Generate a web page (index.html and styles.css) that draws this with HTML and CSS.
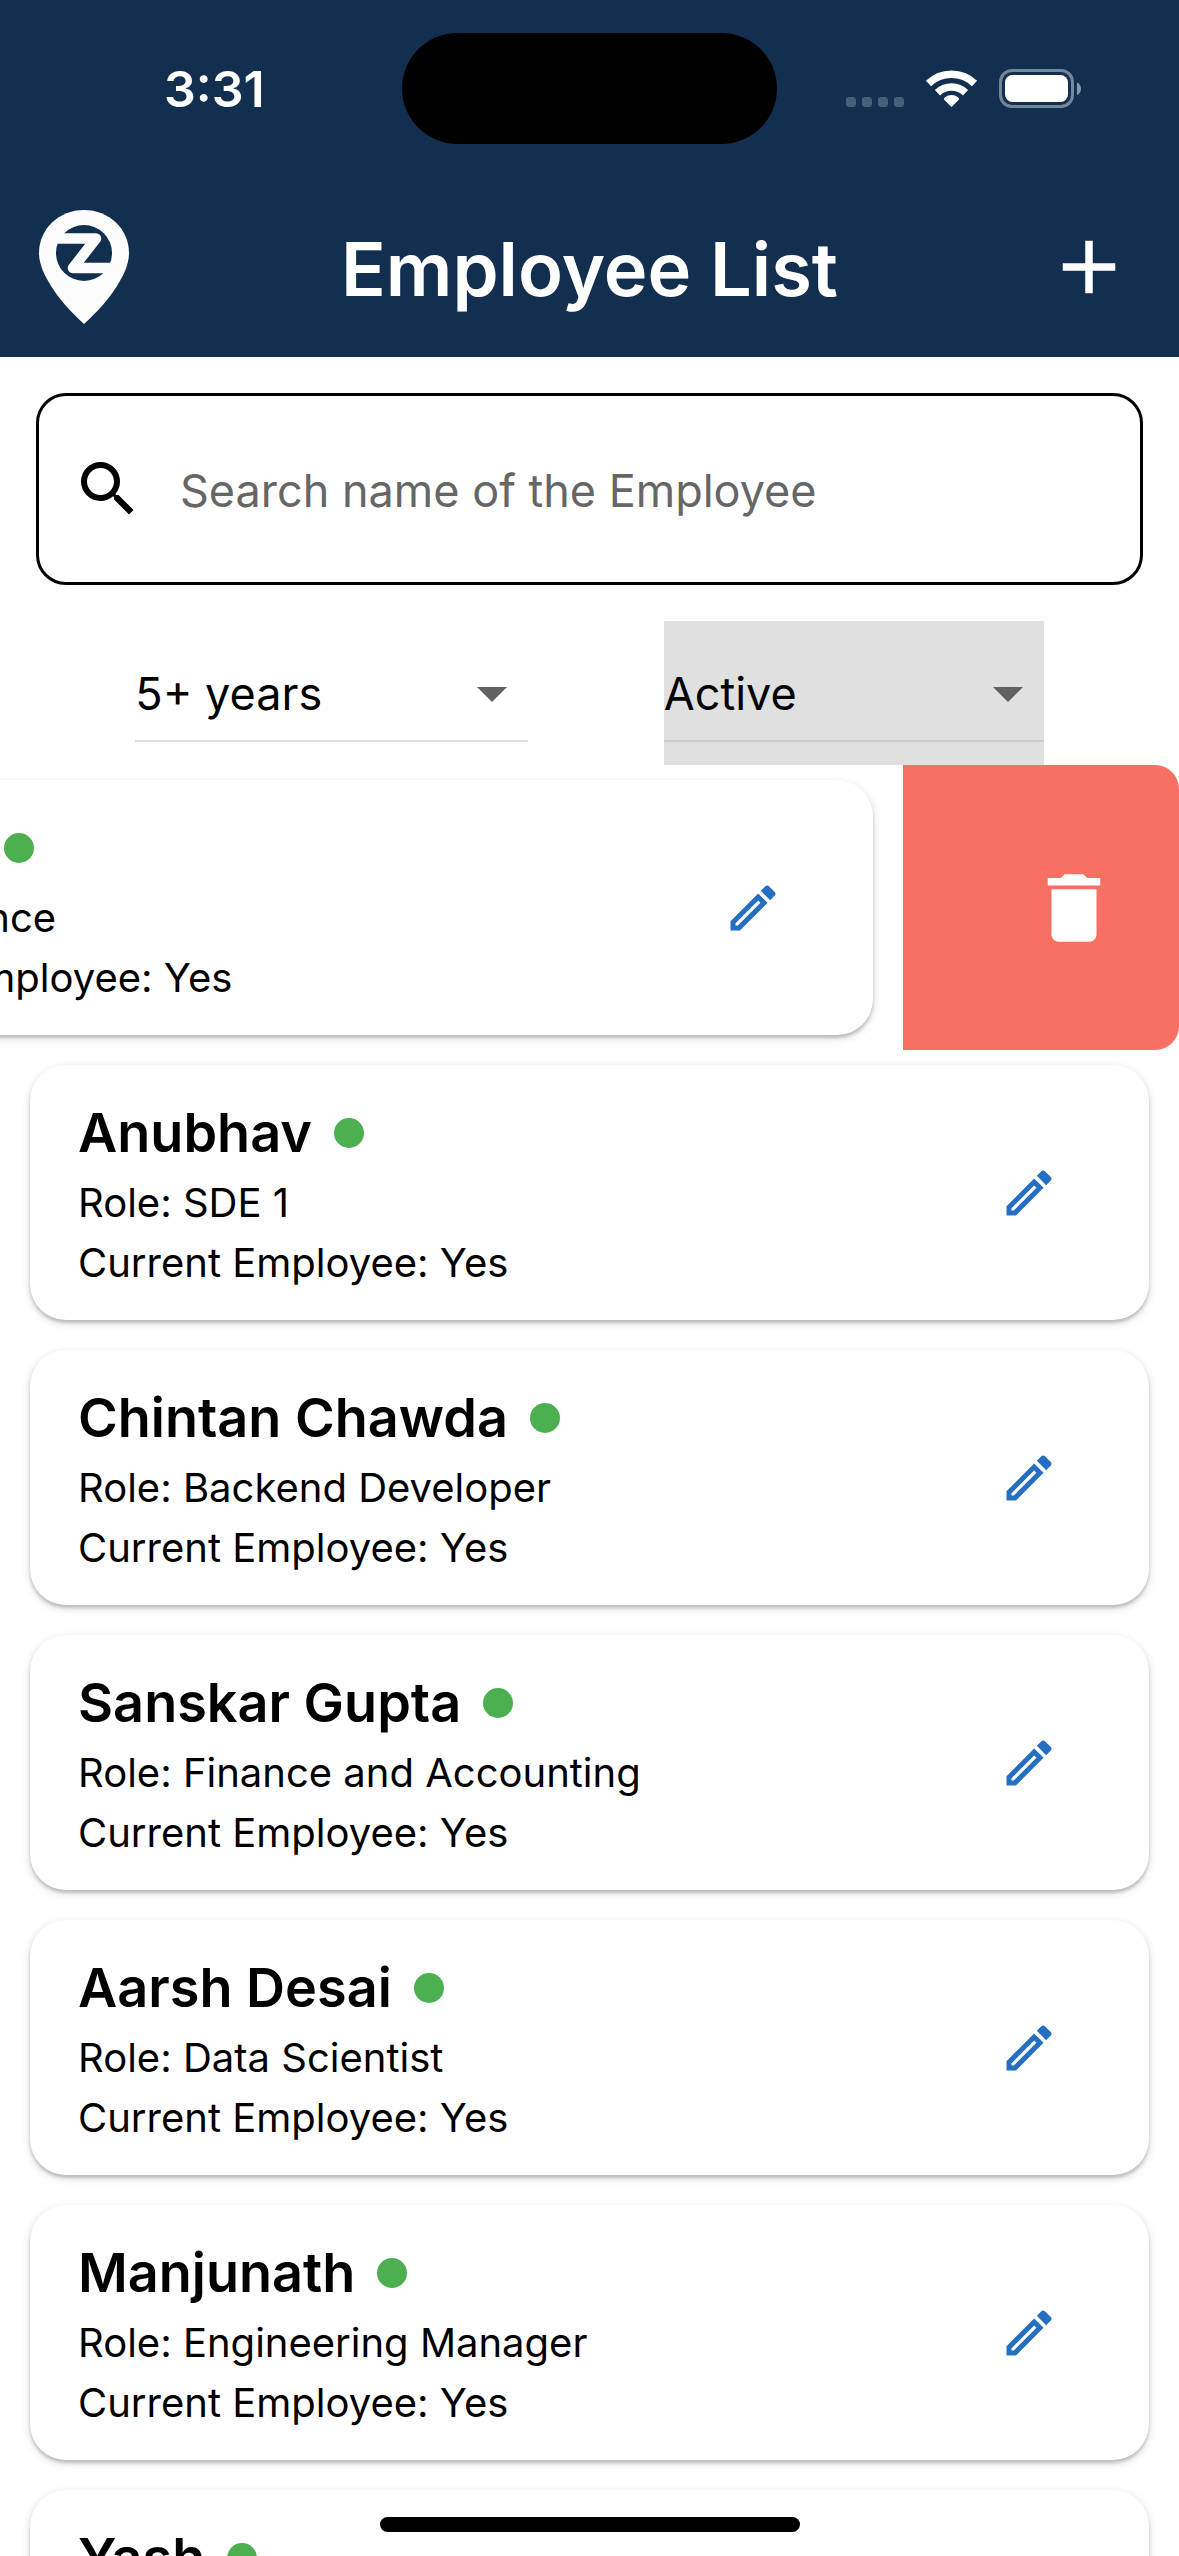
FILE: index.html
```
<!DOCTYPE html>
<html lang="en">
<head>
<meta charset="utf-8">
<meta name="viewport" content="width=device-width, initial-scale=1">
<title>Employee List</title>
<link rel="stylesheet" href="styles.css">
</head>
<body>
<svg class="sprite" aria-hidden="true">
  <symbol id="icon-edit" viewBox="0 0 24 24"><path d="m14.06 9.02.92.92L5.92 19H5v-.92l9.06-9.06M17.66 3c-.25 0-.51.1-.7.29l-1.83 1.83 3.75 3.75 1.83-1.83c.39-.39.39-1.02 0-1.41l-2.34-2.34c-.2-.2-.45-.29-.71-.29zm-3.6 3.19L3 17.25V21h3.75L17.81 9.94l-3.75-3.75z"/></symbol>
  <symbol id="icon-drop" viewBox="0 0 24 24"><path d="m7 10 5 5 5-5z"/></symbol>
</svg>
<div class="app">
  <header class="top">
    <div class="status">
      <time class="clock">3:31</time>
      <div class="island"></div>
      <svg class="signals" viewBox="0 0 236 40" role="img" aria-label="Wi-Fi on, battery full">
        <g fill="#fff" fill-opacity=".23">
          <rect x="0" y="28" width="10" height="10" rx="3"/>
          <rect x="16" y="28" width="10" height="10" rx="3"/>
          <rect x="32" y="28" width="10" height="10" rx="3"/>
          <rect x="48" y="28" width="10" height="10" rx="3"/>
        </g>
        <g fill="none" stroke="#fff">
          <path d="M82.500 14.500A33 33 0 0 1 128.500 14.500" stroke-width="7.500"/>
          <path d="M91.500 23.800A20 20 0 0 1 119.500 23.800" stroke-width="7.500"/>
        </g>
        <path d="M105.500 38 98.500 31c-.8-1-.6-2 .3-2.600a11 11 0 0 1 13.400 0c.9.600 1.100 1.600.3 2.600z" fill="#fff"/>
        <rect x="154.500" y="1.500" width="72" height="36" rx="11.500" fill="none" stroke="#fff" stroke-opacity=".42" stroke-width="3"/>
        <rect x="159" y="6" width="63" height="27" rx="7.500" fill="#fff"/>
        <path d="M231 13.500c5.300 2.200 5.300 10.300 0 12.500z" fill="#fff" fill-opacity=".5"/>
      </svg>
    </div>
    <div class="bar">
      <svg class="logo" viewBox="0 0 90 114" role="img" aria-label="Company logo">
        <path d="M45 0C20 0 0 19 0 43c0 12 6 23 12 33 8 13 20 26 33 38 13-12 25-25 33-38 6-10 12-21 12-33C90 19 70 0 45 0z" fill="#fcfcfd"/>
        <circle cx="45" cy="43" r="28" fill="#122f50"/>
        <path d="M15 28.500H57L34 58H74" fill="none" stroke="#fcfcfd" stroke-width="10.500" stroke-linejoin="round"/>
      </svg>
      <h1 class="title">Employee List</h1>
      <button class="add" type="button" aria-label="Add employee">
        <svg viewBox="0 0 24 24"><path d="M19 13h-6v6h-2v-6H5v-2h6V5h2v6h6v2z"/></svg>
      </button>
    </div>
  </header>

  <main class="content">
    <label class="search">
      <svg class="search-icon" viewBox="0 0 24 24" aria-hidden="true"><path d="M15.500 14h-.79l-.28-.27A6.471 6.471 0 0 0 16 9.500 6.500 6.500 0 1 0 9.500 16c1.610 0 3.090-.59 4.230-1.570l.27.28v.79l5 4.990L20.490 19l-4.990-5zm-6 0C7.010 14 5 11.990 5 9.500S7.010 5 9.500 5 14 7.010 14 9.500 11.990 14 9.500 14z"/></svg>
      <input class="search-input" type="search" placeholder="Search name of the Employee" aria-label="Search name of the Employee">
    </label>

    <div class="filters">
      <div class="filter filter-years">
        <select class="select" aria-label="Experience"><option>5+ years</option></select>
        <svg class="arrow" aria-hidden="true"><use href="#icon-drop"/></svg>
      </div>
      <div class="filter filter-state">
        <select class="select" aria-label="Status"><option>Active</option></select>
        <svg class="arrow" aria-hidden="true"><use href="#icon-drop"/></svg>
      </div>
    </div>

    <ul class="list">
      <li class="row row-open">
        <div class="slot"><article class="card">
          <div class="info">
            <h2 class="name">Anisha<span class="dot"></span></h2>
            <p class="line">Role: Finance</p>
            <p class="line">Current Employee: Yes</p>
          </div>
          <button class="edit" type="button" aria-label="Edit"><svg><use href="#icon-edit"/></svg></button>
        </article></div>
        <button class="delete" type="button" aria-label="Delete">
          <svg viewBox="0 0 24 24"><path d="M6 19c0 1.100.9 2 2 2h8c1.100 0 2-.9 2-2V7H6v12zM19 4h-3.500l-1-1h-5l-1 1H5v2h14V4z"/></svg>
        </button>
      </li>
      <li class="row">
        <div class="slot"><article class="card">
          <div class="info">
            <h2 class="name">Anubhav<span class="dot"></span></h2>
            <p class="line">Role: SDE 1</p>
            <p class="line">Current Employee: Yes</p>
          </div>
          <button class="edit" type="button" aria-label="Edit Anubhav"><svg><use href="#icon-edit"/></svg></button>
        </article></div>
      </li>
      <li class="row">
        <div class="slot"><article class="card">
          <div class="info">
            <h2 class="name">Chintan Chawda<span class="dot"></span></h2>
            <p class="line">Role: Backend Developer</p>
            <p class="line">Current Employee: Yes</p>
          </div>
          <button class="edit" type="button" aria-label="Edit Chintan Chawda"><svg><use href="#icon-edit"/></svg></button>
        </article></div>
      </li>
      <li class="row">
        <div class="slot"><article class="card">
          <div class="info">
            <h2 class="name">Sanskar Gupta<span class="dot"></span></h2>
            <p class="line">Role: Finance and Accounting</p>
            <p class="line">Current Employee: Yes</p>
          </div>
          <button class="edit" type="button" aria-label="Edit Sanskar Gupta"><svg><use href="#icon-edit"/></svg></button>
        </article></div>
      </li>
      <li class="row">
        <div class="slot"><article class="card">
          <div class="info">
            <h2 class="name">Aarsh Desai<span class="dot"></span></h2>
            <p class="line">Role: Data Scientist</p>
            <p class="line">Current Employee: Yes</p>
          </div>
          <button class="edit" type="button" aria-label="Edit Aarsh Desai"><svg><use href="#icon-edit"/></svg></button>
        </article></div>
      </li>
      <li class="row">
        <div class="slot"><article class="card">
          <div class="info">
            <h2 class="name">Manjunath<span class="dot"></span></h2>
            <p class="line">Role: Engineering Manager</p>
            <p class="line">Current Employee: Yes</p>
          </div>
          <button class="edit" type="button" aria-label="Edit Manjunath"><svg><use href="#icon-edit"/></svg></button>
        </article></div>
      </li>
      <li class="row">
        <div class="slot"><article class="card">
          <div class="info">
            <h2 class="name">Yash<span class="dot"></span></h2>
          </div>
        </article></div>
      </li>
    </ul>
  </main>
  <div class="home"></div>
</div>
</body>
</html>
```
FILE: styles.css
```
*, *::before, *::after { box-sizing: border-box; }

body {
  margin: 0;
  background: #fff;
  color: #000;
  font-family: Inter, "Liberation Sans", sans-serif;
}

h1, h2, p, ul { margin: 0; padding: 0; }
button { border: 0; padding: 0; background: none; color: inherit; cursor: pointer; }
svg { display: block; fill: currentColor; }
.sprite { display: none; }

.app {
  display: flex;
  flex-direction: column;
  height: 100vh;
  overflow: hidden;
}

/* Header */
.top { flex: none; background: #122f50; color: #fff; }

.status {
  display: grid;
  grid-template-columns: 1fr auto 1fr;
  align-items: center;
  height: 177px;
}
.clock { padding-left: 164px; font-size: 50px; font-weight: 600; line-height: 60px; }
.island { width: 375px; height: 111px; border-radius: 56px; background: #000; }
.signals { justify-self: end; width: 236px; height: 40px; margin-right: 97px; }

.bar {
  display: grid;
  grid-template-columns: 1fr auto 1fr;
  align-items: center;
  height: 180px;
}
.logo { width: 90px; height: 114px; margin-left: 39px; }
.title { padding-top: 4px; font-size: 74px; font-weight: 600; line-height: 90px; }
.add { justify-self: end; width: 90px; height: 90px; margin-right: 45px; }

/* Search and filters */
.content { flex: 1; min-height: 0; padding-top: 36px; }

.search {
  display: flex;
  align-items: center;
  gap: 36px;
  height: 192px;
  margin: 0 36px;
  padding: 0 33px;
  border: 3px solid #000;
  border-radius: 30px;
}
.search-icon { flex: none; width: 72px; height: 72px; }
.search-input {
  flex: 1;
  min-width: 0;
  padding: 4px 0 0;
  border: 0;
  outline: 0;
  background: none;
  font: 400 45px/60px Inter, "Liberation Sans", sans-serif;
}
.search-input::placeholder { color: #666; opacity: 1; }

.filters { display: flex; justify-content: space-evenly; margin-top: 36px; }
.filter { display: grid; height: 144px; }
.filter-years { width: 393px; }
.filter-state { width: 380px; background: #e0e0e0; }
.select {
  grid-area: 1 / 1;
  align-self: start;
  appearance: none;
  width: 100%;
  margin: 0;
  padding: 43px 72px 16px 0;
  border: 0;
  border-bottom: 2px solid #ddd;
  border-radius: 0;
  outline: 0;
  background: none;
  color: #000;
  font: 400 45px/60px Inter, "Liberation Sans", sans-serif;
}
.filter-state .select { border-color: #cecece; }
.arrow {
  grid-area: 1 / 1;
  justify-self: end;
  width: 72px;
  height: 72px;
  margin-top: 36px;
  color: #616161;
  pointer-events: none;
}

/* Employees */
.list { list-style: none; }
.row { display: flex; overflow: hidden; }
.row-open { justify-content: flex-end; }
.slot { flex: 0 0 100%; padding: 15px 30px; }

.card {
  display: flex;
  align-items: center;
  justify-content: space-between;
  padding: 0 48px;
  border-radius: 36px;
  background: #fff;
  box-shadow: 0 3px 3px rgba(0, 0, 0, .16), 0 3px 9px rgba(0, 0, 0, .16);
}
.info { padding: 30px 0 27px; }
.name {
  display: flex;
  align-items: center;
  gap: 22px;
  margin-bottom: 2px;
  font-size: 54px;
  font-weight: 600;
  line-height: 76px;
}
.dot { width: 30px; height: 30px; border-radius: 50%; background: #4caf50; }
.line { font-size: 40px; line-height: 60px; }

.edit { display: grid; place-items: center; width: 144px; height: 144px; color: #246fc1; }
.edit svg { width: 60px; height: 60px; }

.delete {
  display: flex;
  flex: 0 0 276px;
  align-items: center;
  justify-content: flex-end;
  padding-right: 60px;
  border-radius: 0 24px 24px 0;
  background: #f86f64;
  color: #fff;
}
.delete svg { width: 90px; height: 90px; }

/* Home indicator floats over the list */
.home {
  position: fixed;
  bottom: 24px;
  left: 50%;
  width: 420px;
  height: 15px;
  margin-left: -210px;
  border-radius: 8px;
  background: #000;
}
```
